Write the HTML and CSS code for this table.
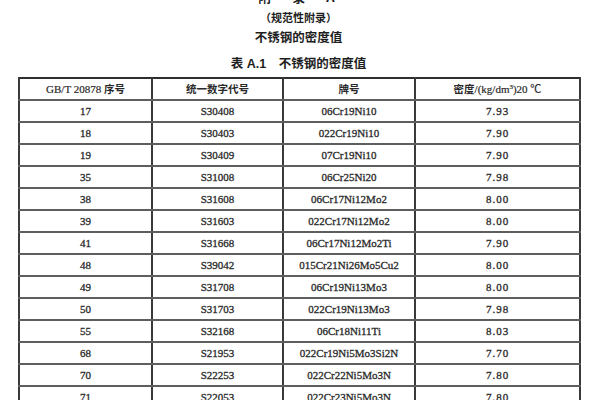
FILE: index.html
```html
<!DOCTYPE html>
<html lang="zh">
<head>
<meta charset="utf-8">
<link rel="stylesheet" href="styles.css">
</head>
<body>
<div class="page">
  <div class="titles">
    <div class="t t-appendix">附　录　A</div>
    <div class="t t-sub">（规范性附录）</div>
    <div class="t t-main">不锈钢的密度值</div>
    <div class="t t-caption">表 A.1　不锈钢的密度值</div>
  </div>
  <table class="density">
    <colgroup>
      <col class="c1"><col class="c2"><col class="c3"><col class="c4">
    </colgroup>
    <thead>
      <tr>
        <th>GB/T 20878 <span class="cjk">序号</span></th>
        <th><span class="cjk">统一数字代号</span></th>
        <th><span class="cjk">牌号</span></th>
        <th><span class="cjk">密度</span>/(kg/dm<sup>3</sup>)20 ℃</th>
      </tr>
    </thead>
    <tbody>
      <tr><td>17</td><td>S30408</td><td>06Cr19Ni10</td><td class="num">7.93</td></tr>
      <tr><td>18</td><td>S30403</td><td>022Cr19Ni10</td><td class="num">7.90</td></tr>
      <tr><td>19</td><td>S30409</td><td>07Cr19Ni10</td><td class="num">7.90</td></tr>
      <tr><td>35</td><td>S31008</td><td>06Cr25Ni20</td><td class="num">7.98</td></tr>
      <tr><td>38</td><td>S31608</td><td>06Cr17Ni12Mo2</td><td class="num">8.00</td></tr>
      <tr><td>39</td><td>S31603</td><td>022Cr17Ni12Mo2</td><td class="num">8.00</td></tr>
      <tr><td>41</td><td>S31668</td><td>06Cr17Ni12Mo2Ti</td><td class="num">7.90</td></tr>
      <tr><td>48</td><td>S39042</td><td>015Cr21Ni26Mo5Cu2</td><td class="num">8.00</td></tr>
      <tr><td>49</td><td>S31708</td><td>06Cr19Ni13Mo3</td><td class="num">8.00</td></tr>
      <tr><td>50</td><td>S31703</td><td>022Cr19Ni13Mo3</td><td class="num">7.98</td></tr>
      <tr><td>55</td><td>S32168</td><td>06Cr18Ni11Ti</td><td class="num">8.03</td></tr>
      <tr><td>68</td><td>S21953</td><td>022Cr19Ni5Mo3Si2N</td><td class="num">7.70</td></tr>
      <tr><td>70</td><td>S22253</td><td>022Cr22Ni5Mo3N</td><td class="num">7.80</td></tr>
      <tr><td>71</td><td>S22053</td><td>022Cr23Ni5Mo3N</td><td class="num">7.80</td></tr>
    </tbody>
  </table>
</div>
</body>
</html>
```

FILE: styles.css
```css
html, body {
  margin: 0;
  padding: 0;
  background: #ffffff;
}

body {
  width: 600px;
  height: 400px;
  overflow: hidden;
  font-family: "Liberation Serif", "Noto Sans CJK SC", serif;
  color: #2a2a2a;
}

.page {
  padding: 0 21px 0 18px;
}

.titles {
  margin-top: -13px;
  text-align: center;
}

.t {
  font-family: "Noto Sans CJK SC", sans-serif;
  font-weight: 700;
  line-height: 20px;
  color: #1e1e1e;
}

.t-appendix {
  font-size: 13px;
  letter-spacing: 4px;
}

.t-sub {
  font-size: 11px;
}

.t-main {
  font-size: 12.5px;
}

.t-caption {
  font-size: 12.5px;
  margin-top: 7px;
  font-family: "Liberation Sans", "Noto Sans CJK SC", sans-serif;
}

.density {
  margin-top: 3px;
  width: 561px;
  border-collapse: collapse;
  table-layout: fixed;
  border-top: 2px solid #2e2e2e;
  border-left: 2px solid #3a3a3a;
  border-right: 2px solid #3a3a3a;
}

.c1 { width: 133px; }
.c2 { width: 131px; }
.c3 { width: 132px; }
.c4 { width: 165px; }

.density th,
.density td {
  height: 20px;
  padding: 0;
  text-align: center;
  vertical-align: middle;
  font-size: 11px;
  line-height: 12px;
  border-bottom: 2px solid #5e5e5e;
  border-left: 2px solid #3a3a3a;
  white-space: nowrap;
}

.density th {
  font-weight: normal;
  color: #2a2a2a;
  -webkit-text-stroke: 0.2px #2a2a2a;
}

.density th .cjk {
  font-family: "Noto Sans CJK SC", sans-serif;
  font-weight: 700;
  font-size: 10.5px;
  -webkit-text-stroke: 0;
}

.density sup {
  font-size: 7px;
  vertical-align: 4px;
  line-height: 0;
}

.density td {
  color: #2a2a2a;
  -webkit-text-stroke: 0.3px #2a2a2a;
}

.density td.num {
  letter-spacing: 1px;
}
```
